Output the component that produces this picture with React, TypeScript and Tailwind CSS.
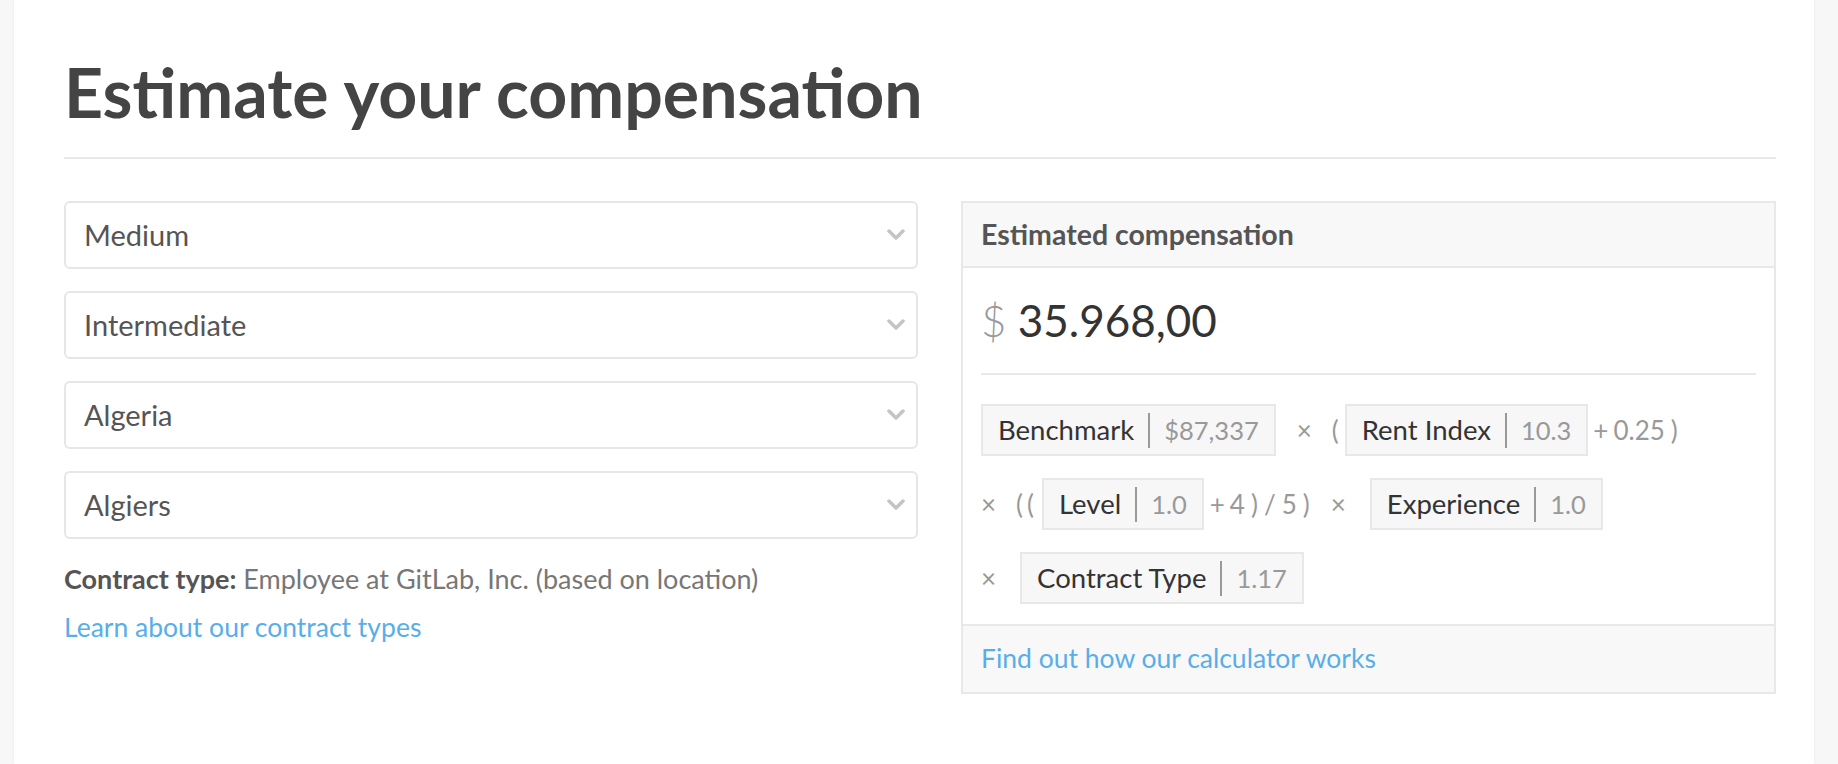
import React from 'react'

const font = { fontFamily: 'Lato, "Open Sans", sans-serif' }

function Chevron() {
  return (
    <svg width="18" height="12" viewBox="0 0 18 12" className="shrink-0">
      <polyline points="2,2 9,9 16,2" fill="none" stroke="#c4c4c4" strokeWidth="3.5" strokeLinecap="round" strokeLinejoin="round" />
    </svg>
  )
}

function Select({ value }: { value: string }) {
  return (
    <div className="flex h-[68px] items-center justify-between rounded-md border-2 border-[#e6e6e6] bg-white pl-[18px] pr-[11px]">
      <span className="text-[29px] text-[#555]">{value}</span>
      <Chevron />
    </div>
  )
}

function Tag({ label, value }: { label: string; value: string }) {
  return (
    <div className="flex h-[52px] shrink-0 items-center border-2 border-[#e8e8e8] bg-[#f7f7f7] px-[15px]">
      <span className="text-[27.5px] text-[#333]">{label}</span>
      <span className="mx-[14px] h-[35px] w-[2px] bg-[#999]" />
      <span className="text-[25.5px] text-[#999]">{value}</span>
    </div>
  )
}

function Op({ children, className = '' }: { children: React.ReactNode; className?: string }) {
  return <span className={`text-[26px] text-[#999] ${className}`}>{children}</span>
}

export default function App() {
  return (
    <div className="min-h-screen bg-[#f7f7f7]" style={font}>
      <div className="ml-[14px] h-[764px] w-[1800px] bg-white pl-[50px] pr-[38px] pt-[58px] shadow-[0_0_3px_rgba(0,0,0,0.06)]">
        <h1 className="text-[68px] font-bold leading-none text-[#444]">Estimate your compensation</h1>
        <div className="mt-[31px] h-[2px] bg-[#e8e8e8]" />

        <div className="mt-[42px] flex gap-[43px]">
          <div className="w-[854px] shrink-0">
            <div className="flex flex-col gap-[22px]">
              <Select value="Medium" />
              <Select value="Intermediate" />
              <Select value="Algeria" />
              <Select value="Algiers" />
            </div>
            <p className="mt-[22px] text-[27px] leading-[36px] text-[#777]">
              <span className="font-bold text-[#555]">Contract type:</span> Employee at GitLab, Inc. (based on location)
            </p>
            <a className="mt-[12px] block text-[26.5px] leading-[36px] text-[#58aee8]">Learn about our contract types</a>
          </div>

          <div className="w-[815px] shrink-0 border-2 border-[#e8e8e8]">
            <div className="flex h-[65px] items-center border-b-2 border-[#e8e8e8] bg-[#f8f8f8] px-[18px]">
              <span className="text-[28.5px] font-bold text-[#555]">Estimated compensation</span>
            </div>
            <div className="px-[18px] pt-[30px]">
              <div className="text-[44px] leading-none text-[#333]">
                <span className="font-light text-[#999]">$</span> 35.968,00
              </div>
              <div className="mt-[31px] h-[2px] bg-[#e8e8e8]" />
              <div className="flex flex-col gap-[22px] pb-[20px] pt-[29px]">
                <div className="flex items-center">
                  <Tag label="Benchmark" value="$87,337" />
                  <Op className="ml-[21px]">×</Op>
                  <Op className="ml-[20px]">(</Op>
                  <div className="ml-[6px]">
                    <Tag label="Rent Index" value="10.3" />
                  </div>
                  <Op className="ml-[5px]">+</Op>
                  <Op className="ml-[5px]">0.25</Op>
                  <Op className="ml-[6px]">)</Op>
                </div>
                <div className="flex items-center">
                  <Op>×</Op>
                  <Op className="ml-[20px]">(</Op>
                  <Op className="ml-[4px]">(</Op>
                  <div className="ml-[8px]">
                    <Tag label="Level" value="1.0" />
                  </div>
                  <Op className="ml-[6px]">+</Op>
                  <Op className="ml-[5px]">4</Op>
                  <Op className="ml-[6px]">)</Op>
                  <Op className="ml-[6px]">/</Op>
                  <Op className="ml-[6px]">5</Op>
                  <Op className="ml-[6px]">)</Op>
                  <Op className="ml-[21px]">×</Op>
                  <div className="ml-[24px]">
                    <Tag label="Experience" value="1.0" />
                  </div>
                </div>
                <div className="flex items-center">
                  <Op>×</Op>
                  <div className="ml-[24px]">
                    <Tag label="Contract Type" value="1.17" />
                  </div>
                </div>
              </div>
            </div>
            <div className="flex h-[68px] items-center border-t-2 border-[#e8e8e8] bg-[#f8f8f8] px-[18px]">
              <a className="text-[26.5px] text-[#58aee8]">Find out how our calculator works</a>
            </div>
          </div>
        </div>
      </div>
    </div>
  )
}
